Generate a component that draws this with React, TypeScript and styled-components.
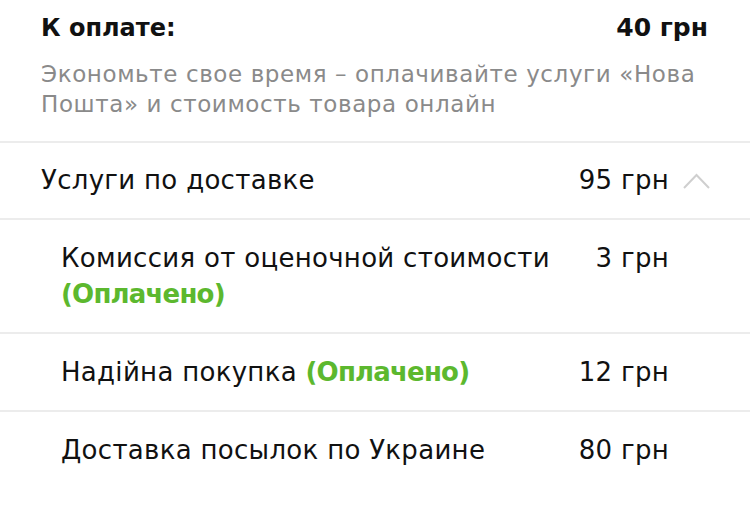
import styled, { createGlobalStyle } from "styled-components";

const GlobalStyle = createGlobalStyle`
  body {
    margin: 0;
    background: #fff;
    font-family: "DejaVu Sans", "Noto Sans", sans-serif;
    color: #111;
  }
`;

const App = () => {
  const services = [
    { name: "Комиссия от оценочной стоимости", paid: true, wrap: true, price: "3 грн" },
    { name: "Надійна покупка", paid: true, wrap: false, price: "12 грн" },
    { name: "Доставка посылок по Украине", paid: false, wrap: false, price: "80 грн" }
  ];

  return (
    <Wrapper>
      <GlobalStyle />
      <Header>
        <TitleRow>
          <h2>К оплате:</h2>
          <strong>40 грн</strong>
        </TitleRow>
        <Hint>Экономьте свое время – оплачивайте услуги «Нова Пошта» и стоимость товара онлайн</Hint>
      </Header>

      <GroupRow>
        <span>Услуги по доставке</span>
        <GroupPrice>
          <span>95 грн</span>
          <svg width="27" height="16" viewBox="0 0 27 16">
            <path d="M1 15 L13.5 2 L26 15" fill="none" stroke="#cfcfcf" strokeWidth="2" />
          </svg>
        </GroupPrice>
      </GroupRow>

      {services.map((item, index) => {
        return (
          <ServiceRow key={index}>
            <div>
              {item.name}
              {item.paid && (
                <>
                  {item.wrap ? <br /> : " "}
                  <Paid>(Оплачено)</Paid>
                </>
              )}
            </div>
            <span>{item.price}</span>
          </ServiceRow>
        );
      })}
    </Wrapper>
  );
};

const Wrapper = styled.main`
  width: 750px;
  min-height: 517px;
  background: #fff;
`;

const Header = styled.header`
  padding: 13px 42px 22px 41px;
`;

const TitleRow = styled.div`
  display: flex;
  justify-content: space-between;
  align-items: center;
  line-height: 30px;
  font-size: 24px;
  font-weight: 700;
  h2 {
    margin: 0;
    font-size: 24px;
  }
  strong {
    font-size: 25px;
  }
`;

const Hint = styled.p`
  margin: 16px 0 0;
  font-size: 23px;
  letter-spacing: 0.6px;
  line-height: 30px;
  color: #8a8a8a;
`;

const GroupRow = styled.div`
  display: flex;
  justify-content: space-between;
  align-items: center;
  border-top: 2px solid #ececec;
  padding: 19px 40px 20px 41px;
  font-size: 26px;
  letter-spacing: 0.3px;
  line-height: 36px;
`;

const GroupPrice = styled.div`
  display: flex;
  align-items: center;
  gap: 14px;
  svg {
    margin-top: 2px;
  }
`;

const ServiceRow = styled.div`
  display: flex;
  justify-content: space-between;
  align-items: flex-start;
  gap: 24px;
  border-top: 2px solid #ececec;
  padding: 20px 81px 20px 61px;
  font-size: 26px;
  letter-spacing: 0.3px;
  line-height: 36px;
  span {
    white-space: nowrap;
  }
`;

const Paid = styled.b`
  color: #5cb82e;
  font-weight: 700;
  letter-spacing: -0.8px;
`;

export default App;
